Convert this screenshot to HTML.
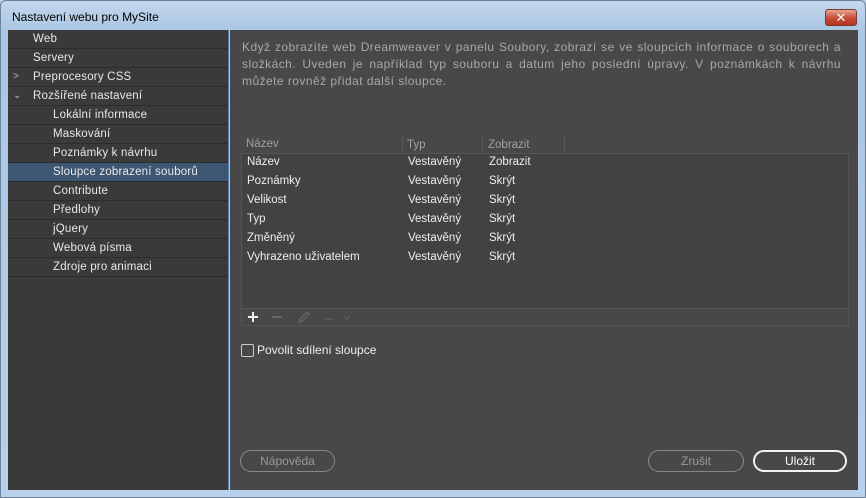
<!DOCTYPE html>
<html><head><meta charset="utf-8"><style>
*{margin:0;padding:0;box-sizing:border-box}
body{width:866px;height:498px;background:#b9d1ea;font-family:"Liberation Sans","DejaVu Sans",sans-serif;font-size:12px;position:relative;overflow:hidden}
.frame{position:absolute;left:0;top:0;width:866px;height:498px;border:1px solid #6d8399;border-radius:6px 6px 0 0;background:linear-gradient(#c4d7ec,#aac6e3 30px,#b8d0ea)}
.title{position:absolute;left:12px;top:10px;color:#000;font-size:12px}
.close{position:absolute;left:825px;top:9px;width:32px;height:17px;border:1px solid #7a3a30;border-radius:3px;background:linear-gradient(#e6a393,#c9513c 50%,#b8331c);color:#fff;font-weight:bold;text-align:center;font-size:13px;line-height:15px}
.side{position:absolute;left:8px;top:30px;width:221px;height:460px;background:#3a3a3a;border-right:1px solid #4f7fb0}
.row{height:19px;border-bottom:1px solid #2c2c2c;color:#e8e8e8;line-height:18px;padding-left:25px;font-size:11.5px;letter-spacing:0.2px;position:relative}
.row.s{padding-left:45px}
.row.sel{background:#3d5672}
.arr{position:absolute;left:5px;top:0;color:#bbb;font-size:10px}
.main{position:absolute;left:230px;top:30px;width:628px;height:460px;background:#484848}
.desc{position:absolute;left:12px;top:9px;width:599px;color:#a8a8a8;font-size:12px;line-height:17px;letter-spacing:0.45px}
.desc div{white-space:nowrap;text-align:justify;text-align-last:justify}
.desc div.l{text-align-last:left}
.tbl{position:absolute;left:11px;top:105px;width:608px}
.hd{height:18px;color:#a0a0a0;position:relative;font-size:11.5px}
.hd span,.tr span{position:absolute;top:2px}
.body{height:155px;background:#424242;border:1px solid #555;border-bottom:none}
.tr{height:19px;position:relative;color:#eee;font-size:11.5px}
.tb{height:18px;border:1px solid #555;background:#484848;position:relative}
.btn{position:absolute;height:22px;border:1px solid #888;border-radius:11px;color:#999;text-align:center;line-height:20px;font-size:12px}
</style></head><body>
<div class="frame"></div>
<div class="title">Nastavení webu pro MySite</div>
<div class="close">✕</div>
<div class="side">
<div class="row">Web</div>
<div class="row">Servery</div>
<div class="row"><span class="arr">&gt;</span>Preprocesory CSS</div>
<div class="row"><span class="arr">⌄</span>Rozšířené nastavení</div>
<div class="row s">Lokální informace</div>
<div class="row s">Maskování</div>
<div class="row s">Poznámky k návrhu</div>
<div class="row s sel">Sloupce zobrazení souborů</div>
<div class="row s">Contribute</div>
<div class="row s">Předlohy</div>
<div class="row s">jQuery</div>
<div class="row s">Webová písma</div>
<div class="row s">Zdroje pro animaci</div>
</div>
<div class="main">
<div class="desc"><div>Když zobrazíte web Dreamweaver v panelu Soubory, zobrazí se ve sloupcích informace o souborech a</div><div>složkách. Uveden je například typ souboru a datum jeho poslední úpravy. V poznámkách k návrhu</div><div class="l">můžete rovněž přidat další sloupce.</div></div>
<div class="tbl">
<div class="hd"><span style="left:5px;top:3px">Název</span><span style="left:161px;border-left:1px solid #5a5a5a;padding-left:4px;top:0;height:18px;line-height:20px">Typ</span><span style="left:241px;border-left:1px solid #5a5a5a;padding-left:5px;top:0;height:18px;line-height:20px">Zobrazit</span><span style="left:323px;border-left:1px solid #5a5a5a;top:0;height:18px"></span></div>
<div class="body">
<div class="tr"><span style="left:5px">Název</span><span style="left:166px">Vestavěný</span><span style="left:247px">Zobrazit</span></div>
<div class="tr"><span style="left:5px">Poznámky</span><span style="left:166px">Vestavěný</span><span style="left:247px">Skrýt</span></div>
<div class="tr"><span style="left:5px">Velikost</span><span style="left:166px">Vestavěný</span><span style="left:247px">Skrýt</span></div>
<div class="tr"><span style="left:5px">Typ</span><span style="left:166px">Vestavěný</span><span style="left:247px">Skrýt</span></div>
<div class="tr"><span style="left:5px">Změněný</span><span style="left:166px">Vestavěný</span><span style="left:247px">Skrýt</span></div>
<div class="tr"><span style="left:5px">Vyhrazeno uživatelem</span><span style="left:166px">Vestavěný</span><span style="left:247px">Skrýt</span></div>
</div>
<div class="tb"><svg width="140" height="16" style="position:absolute;left:3px;top:0">
<path d="M3 8h10M8 3v10" stroke="#eee" stroke-width="2"/>
<path d="M27 8h10" stroke="#666" stroke-width="2"/>
<path d="M54 13l1-3 7-7 2 2-7 7z" fill="none" stroke="#666" stroke-width="1.3"/>
<path d="M79 10h9" stroke="#5c5c5c" stroke-width="1.5"/>
<path d="M99 7l3 3 3-3" fill="none" stroke="#5c5c5c" stroke-width="1.2"/>
</svg></div>
</div>
<div style="position:absolute;left:11px;top:314px;width:13px;height:13px;border:1px solid #ccc;border-radius:2px"></div>
<div style="position:absolute;left:27px;top:313px;color:#eee;font-size:12px">Povolit sdílení sloupce</div>
<div class="btn" style="left:10px;top:420px;width:95px">Nápověda</div>
<div class="btn" style="left:418px;top:420px;width:96px">Zrušit</div>
<div class="btn" style="left:523px;top:420px;width:94px;border:2px solid #f2f2f2;color:#fff;line-height:18px">Uložit</div>
</div>
</body></html>
